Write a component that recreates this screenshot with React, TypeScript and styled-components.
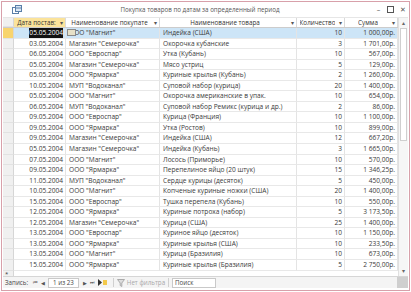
import React from 'react'
import styled, { createGlobalStyle } from 'styled-components'

interface Row {
  date: string
  buyer: string
  product: string
  qty: number
  sum: string
}

const rows: Row[] = [
  { date: '05.05.2004', buyer: 'ООО "Магнит"', product: 'Индейка (США)', qty: 10, sum: '1 000,00р.' },
  { date: '03.05.2004', buyer: 'Магазин "Семерочка"', product: 'Окорочка кубанские', qty: 3, sum: '1 701,00р.' },
  { date: '06.05.2004', buyer: 'ООО "Евроспар"', product: 'Утка (Кубань)', qty: 10, sum: '567,00р.' },
  { date: '05.05.2004', buyer: 'Магазин "Семерочка"', product: 'Мясо устриц', qty: 5, sum: '129,00р.' },
  { date: '05.05.2004', buyer: 'ООО "Ярмарка"', product: 'Куриные крылья (Кубань)', qty: 2, sum: '1 260,00р.' },
  { date: '10.05.2004', buyer: 'МУП "Водоканал"', product: 'Суповой набор (курица)', qty: 20, sum: '1 400,00р.' },
  { date: '05.05.2004', buyer: 'ООО "Магнит"', product: 'Окорочка американские в упак.', qty: 10, sum: '654,00р.' },
  { date: '06.05.2004', buyer: 'МУП "Водоканал"', product: 'Суповой набор Ремикс (курица и др.)', qty: 2, sum: '86,00р.' },
  { date: '09.05.2004', buyer: 'ООО "Евроспар"', product: 'Курица (Франция)', qty: 10, sum: '1 100,00р.' },
  { date: '09.05.2004', buyer: 'ООО "Ярмарка"', product: 'Утка (Ростов)', qty: 10, sum: '899,00р.' },
  { date: '09.05.2004', buyer: 'Магазин "Семерочка"', product: 'Индейка (США)', qty: 12, sum: '667,20р.' },
  { date: '05.05.2004', buyer: 'Магазин "Семерочка"', product: 'Индейка (Кубань)', qty: 3, sum: '1 665,00р.' },
  { date: '07.05.2004', buyer: 'ООО "Магнит"', product: 'Лосось (Приморье)', qty: 10, sum: '570,00р.' },
  { date: '09.05.2004', buyer: 'ООО "Ярмарка"', product: 'Перепелиное яйцо (20 штук)', qty: 15, sum: '1 346,25р.' },
  { date: '11.05.2004', buyer: 'МУП "Водоканал"', product: 'Сердце курицы (десяток)', qty: 5, sum: '450,00р.' },
  { date: '10.05.2004', buyer: 'ООО "Магнит"', product: 'Копченые куриные ножки (США)', qty: 20, sum: '1 400,00р.' },
  { date: '15.05.2004', buyer: 'ООО "Евроспар"', product: 'Тушка перепела (Кубань)', qty: 10, sum: '550,00р.' },
  { date: '12.05.2004', buyer: 'ООО "Ярмарка"', product: 'Куриные потроха (набор)', qty: 5, sum: '3 173,50р.' },
  { date: '12.05.2004', buyer: 'Магазин "Семерочка"', product: 'Курица (США)', qty: 25, sum: '1 400,00р.' },
  { date: '13.05.2004', buyer: 'ООО "Евроспар"', product: 'Куриное яйцо (десяток)', qty: 10, sum: '1 150,00р.' },
  { date: '13.05.2004', buyer: 'ООО "Ярмарка"', product: 'Куриные крылья (США)', qty: 10, sum: '233,50р.' },
  { date: '13.05.2004', buyer: 'ООО "Магнит"', product: 'Курица (Бразилия)', qty: 10, sum: '673,00р.' },
  { date: '15.05.2004', buyer: 'ООО "Ярмарка"', product: 'Куриные крылья (Бразилия)', qty: 5, sum: '2 750,00р.' },
]

const COLS = '11px 52px 94px 137px 48px 53px'

const headers = ['Дата постав:', 'Наименование покупате', 'Наименование товара', 'Количество', 'Сумма']

const App: React.FC = () => {
  return (
    <>
      <GlobalStyle />
      <Window>
        <TitleBar>
          <AppIcon viewBox="0 0 10 9">
            <rect x="0.5" y="2.5" width="6" height="6" fill="#fff" stroke="#5b7fa8" />
            <rect x="3.5" y="0.5" width="6" height="6" fill="#dbe8f5" stroke="#5b7fa8" />
            <line x1="3.5" y1="3" x2="9.5" y2="3" stroke="#5b7fa8" />
          </AppIcon>
          <Title>Покупка товаров по датам за определенный период</Title>
          <Controls>
            <Ctl>–</Ctl>
            <Ctl>
              <svg width="7" height="7" viewBox="0 0 7 7">
                <rect x="0.5" y="0.5" width="6" height="6" fill="none" stroke="#555" />
              </svg>
            </Ctl>
            <Ctl>✕</Ctl>
          </Controls>
        </TitleBar>

        <Body>
          <Sheet>
            <HeaderRow>
              <Selector />
              {headers.map((h, i) => (
                <HeadCell key={h} $active={i === 0}>
                  <HeadText>{h}</HeadText>
                  <Arrow>▾</Arrow>
                </HeadCell>
              ))}
            </HeaderRow>
            {rows.map((r, i) => (
              <DataRow key={i} $selected={i === 0}>
                <Selector $current={i === 0} />
                <Cell $right>
                  {i === 0 ? <Highlight>{r.date}</Highlight> : r.date}
                </Cell>
                <Cell>
                  {i === 0 && <EditMark />}
                  {r.buyer}
                </Cell>
                <Cell>{r.product}</Cell>
                <Cell $right>{r.qty}</Cell>
                <Cell $right>{r.sum}</Cell>
              </DataRow>
            ))}
            <NewRow>
              <Selector>*</Selector>
            </NewRow>
          </Sheet>
          <ScrollBar>
            <ScrollBtn>▴</ScrollBtn>
            <Track>
              <Thumb />
            </Track>
            <ScrollBtn>▾</ScrollBtn>
          </ScrollBar>
        </Body>

        <NavBar>
          <NavLabel>Запись:</NavLabel>
          <NavBtn>⏮</NavBtn>
          <NavBtn>◀</NavBtn>
          <NavInput>1 из 23</NavInput>
          <NavBtn>▶</NavBtn>
          <NavBtn>⏭</NavBtn>
          <NewRec>
            <svg width="9" height="7" viewBox="0 0 9 7">
              <path d="M0 0 L4 3.5 L0 7 Z" fill="#333" />
              <rect x="5" y="1" width="4" height="5" fill="#f3c94b" />
            </svg>
          </NewRec>
          <NavSep />
          <FilterIcon viewBox="0 0 8 8">
            <path d="M0.5 0.5 H7.5 L4.8 4 V7.5 L3.2 6.5 V4 Z" fill="#ddd" stroke="#aaa" />
          </FilterIcon>
          <NoFilter>Нет фильтра</NoFilter>
          <NavSep />
          <SearchBox>Поиск</SearchBox>
          <NavFill />
          <Grip />
        </NavBar>
      </Window>
    </>
  )
}

const GlobalStyle = createGlobalStyle`
  html, body {
    margin: 0;
    padding: 0;
    background: #fff;
  }
  body {
    font-family: 'Open Sans', 'Noto Sans', sans-serif;
    color: #333;
  }
`

const Window = styled.div`
  width: 411px;
  height: 292px;
  box-sizing: border-box;
  border: 1px solid #fff;
  outline: 1px solid #d8a0aa;
  outline-offset: -2px;
  padding: 1px 2px 3px 2px;
  display: flex;
  flex-direction: column;
  background: #fff;
  overflow: hidden;
`

const TitleBar = styled.div`
  height: 15px;
  display: flex;
  align-items: center;
  padding-left: 9px;
  flex-shrink: 0;
`

const AppIcon = styled.svg`
  width: 10px;
  height: 9px;
`

const Title = styled.div`
  flex: 1;
  text-align: center;
  font-size: 6.2px;
  color: #555;
  padding-left: 4px;
`

const Controls = styled.div`
  display: flex;
  align-items: center;
  gap: 3px;
  padding-right: 1px;
`

const Ctl = styled.div`
  width: 9px;
  height: 11px;
  display: flex;
  align-items: center;
  justify-content: center;
  font-size: 7px;
  color: #555;
`

const Body = styled.div`
  display: flex;
  flex: 1;
  border-top: 1px solid #e6e6e6;
  min-height: 0;
`

const Sheet = styled.div`
  width: 395px;
  display: flex;
  flex-direction: column;
`

const HeaderRow = styled.div`
  display: grid;
  grid-template-columns: ${COLS};
  height: 11px;
  border-bottom: 1px solid #cccccc;
  font-size: 6.3px;
`

const Selector = styled.div<{ $current?: boolean }>`
  background: ${(p) => (p.$current ? '#f8d46e' : '#f0f0f0')};
  border-right: 1px solid #d6d6d6;
  border-bottom: 1px solid #e2e2e2;
  font-size: 6px;
  line-height: 7px;
  padding-left: 2px;
  box-sizing: border-box;
  height: 100%;
`

const HeadCell = styled.div<{ $active?: boolean }>`
  display: flex;
  align-items: center;
  justify-content: center;
  position: relative;
  padding: 0 7px 0 1px;
  background: ${(p) => (p.$active ? '#fbe39a' : '#fff')};
  color: #333;
  border-right: 1px solid #dadada;
  white-space: nowrap;
  overflow: hidden;
`

const HeadText = styled.span`
  overflow: hidden;
`

const Arrow = styled.span`
  position: absolute;
  right: 2px;
  top: 1px;
  font-size: 5.5px;
  color: #555;
`

const DataRow = styled.div<{ $selected?: boolean }>`
  display: grid;
  grid-template-columns: ${COLS};
  height: 10.55px;
  font-size: 6.6px;
  line-height: 10px;
  background: ${(p) => (p.$selected ? '#cde5f7' : '#fff')};
`

const Cell = styled.div<{ $right?: boolean }>`
  position: relative;
  padding: 0 2px 0 3px;
  text-align: ${(p) => (p.$right ? 'right' : 'left')};
  white-space: nowrap;
  overflow: hidden;
  border-right: 1px solid #e4e4e4;
  border-bottom: 1px solid #e8e8e8;
  box-sizing: border-box;
  color: #3a3a3a;
`

const Highlight = styled.span`
  background: #111;
  color: #fff;
  padding: 1px 0;
`

const EditMark = styled.span`
  position: absolute;
  left: 1px;
  top: 1px;
  width: 9px;
  height: 7px;
  background: #e7e1c8;
  border: 1px solid #8a8a8a;
  box-sizing: border-box;
`

const NewRow = styled.div`
  display: grid;
  grid-template-columns: 11px 1fr;
  height: 8px;
  flex-shrink: 0;
`

const ScrollBar = styled.div`
  width: 11px;
  display: flex;
  flex-direction: column;
  border-left: 1px solid #e0e0e0;
  background: #f6f6f6;
  box-sizing: border-box;
`

const ScrollBtn = styled.div`
  height: 10px;
  font-size: 6px;
  display: flex;
  align-items: center;
  justify-content: center;
  color: #666;
`

const Track = styled.div`
  flex: 1;
  padding: 0 1px;
`

const Thumb = styled.div`
  height: 113px;
  background: #fff;
  border: 1px solid #cfcfcf;
  box-sizing: border-box;
`

const NavBar = styled.div`
  height: 11px;
  display: flex;
  align-items: center;
  font-size: 6.2px;
  color: #444;
  border-top: 1px solid #d6d6d6;
  flex-shrink: 0;
  background: #f4f4f4;
  padding-left: 2px;
`

const NavLabel = styled.span`
  margin-right: 5px;
`

const NavBtn = styled.span`
  font-size: 5px;
  color: #555;
  margin-right: 3px;
`

const NavInput = styled.span`
  background: #fff;
  border: 1px solid #c9c9c9;
  padding: 0 4px;
  margin-right: 4px;
  height: 8px;
  line-height: 8px;
`

const NewRec = styled.span`
  display: flex;
  align-items: center;
  margin-right: 3px;
`

const NavSep = styled.span`
  width: 1px;
  height: 9px;
  background: #d0d0d0;
  margin: 0 3px;
`

const FilterIcon = styled.svg`
  width: 8px;
  height: 8px;
  margin-right: 2px;
`

const NoFilter = styled.span`
  color: #a8a8a8;
`

const SearchBox = styled.span`
  background: #fff;
  border: 1px solid #c9c9c9;
  width: 40px;
  height: 8px;
  line-height: 8px;
  padding-left: 2px;
`

const NavFill = styled.span`
  flex: 1;
  height: 100%;
`

const Grip = styled.span`
  width: 11px;
  height: 100%;
  background: #cfcfcf;
`

export default App
